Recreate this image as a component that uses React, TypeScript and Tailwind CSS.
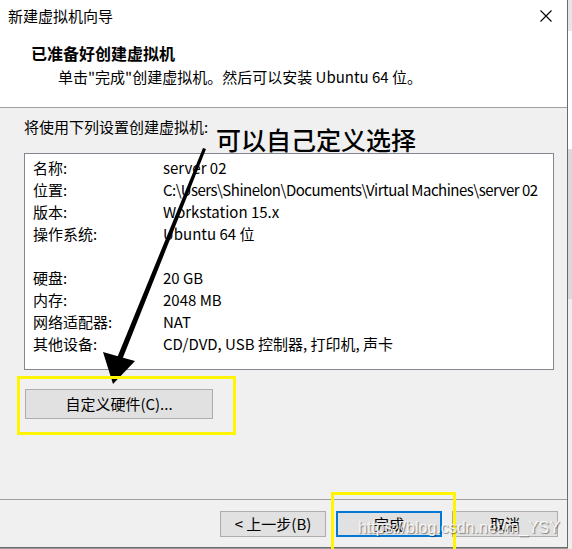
import React from 'react';

const font = "font-['Noto_Sans_CJK_SC',sans-serif]";

const rows: [string, string][] = [
  ['名称:', 'server 02'],
  ['位置:', 'C:\\Users\\Shinelon\\Documents\\Virtual Machines\\server 02'],
  ['版本:', 'Workstation 15.x'],
  ['操作系统:', 'Ubuntu 64 位'],
  ['', ''],
  ['硬盘:', '20 GB'],
  ['内存:', '2048 MB'],
  ['网络适配器:', 'NAT'],
  ['其他设备:', 'CD/DVD, USB 控制器, 打印机, 声卡'],
];

const Arrow = () => (
  <svg className="absolute left-0 top-0 pointer-events-none" width="572" height="549">
    <polygon points="203,148 206,149 122,360 117,358" fill="#000" />
    <polygon points="113,384 103,352 124,358 135,361" fill="#000" />
  </svg>
);

const App = () => {
  return (
    <div className={`relative w-[572px] h-[549px] overflow-hidden flex bg-[#9a9a9a] text-black ${font}`}>
      <div className="w-[568px] h-[548px] flex flex-col border-r border-b border-[#6b6b6b] bg-[#f0f0f0]">
        <div className="h-[108px] bg-white border-b border-[#a0a0a0]">
          <div className="h-[32px] flex items-center justify-between pl-[8px] pr-[15px]">
            <span className="text-[15px] leading-[20px]">新建虚拟机向导</span>
            <svg width="12" height="12" viewBox="0 0 12 12">
              <path d="M0.5 0.5 L11.5 11.5 M11.5 0.5 L0.5 11.5" stroke="#000" strokeWidth="1.1" />
            </svg>
          </div>
          <div className="pl-[31px] mt-[11px]">
            <div className="text-[16px] leading-[20px] font-bold">已准备好创建虚拟机</div>
            <div className="text-[15px] leading-[20px] mt-[4px] pl-[27px]">
              单击"完成"创建虚拟机。然后可以安装 Ubuntu 64 位。
            </div>
          </div>
        </div>

        <div className="h-[391px] px-[24px] pt-[9px]">
          <div className="text-[15px] leading-[20px]">将使用下列设置创建虚拟机:</div>
          <div className="mt-[16px] w-[530px] h-[217px] bg-white border border-[#828790] pt-[3px] pl-[8px]">
            {rows.map(([label, value], i) => (
              <div key={i} className="flex h-[22px] items-center text-[15px] leading-[20px]">
                <span className="w-[130px] shrink-0">{label}</span>
                <span className={i === 1 ? 'whitespace-nowrap tracking-[-0.5px]' : 'whitespace-nowrap'}>
                  {value}
                </span>
              </div>
            ))}
          </div>
          <button className="mt-[19px] ml-[1px] w-[188px] h-[30px] flex items-center justify-center border border-[#adadad] bg-[#e1e1e1] text-[15px] leading-[20px]">
            自定义硬件(C)...
          </button>
        </div>

        <div className="h-[48px] border-t border-[#a0a0a0] flex justify-end gap-[10px] pt-[11px] pr-[9px]">
          <button className="w-[106px] h-[26px] flex items-center justify-center border border-[#adadad] bg-[#e1e1e1] text-[15px] leading-[20px]">
            &lt; 上一步(B)
          </button>
          <button className="w-[106px] h-[26px] flex items-center justify-center border-2 border-[#0078d7] bg-[#e1e1e1] text-[15px] leading-[20px]">
            完成
          </button>
          <button className="w-[106px] h-[26px] flex items-center justify-center border border-[#adadad] bg-[#e1e1e1] text-[15px] leading-[20px]">
            取消
          </button>
        </div>
      </div>

      <div className="flex-1 flex flex-col">
        <div className="h-[31px] bg-[#e6e6e6]" />
        <div className="h-[118px] bg-white" />
        <div className="h-[150px] bg-[#dadada]" />
        <div className="flex-1 bg-[#eeeeee]" />
      </div>

      <div className="absolute left-[216px] top-[127px] text-[25px] leading-[25px] font-medium whitespace-nowrap">
        可以自己定义选择
      </div>
      <Arrow />
      <div className="absolute left-[17px] top-[376px] w-[219px] h-[59px] border-[3px] border-[#fff500]" />
      <div className="absolute left-[331px] top-[492px] w-[125px] h-[70px] border-[3px] border-[#fff500]" />
      <div className="absolute left-[358px] top-[518px] text-[16px] leading-[20px] font-['Liberation_Sans',sans-serif] text-white/85 [text-shadow:1px_1px_1px_rgba(0,0,0,0.45)] whitespace-nowrap">
        https://blog.csdn.net/m_YSY
      </div>
    </div>
  );
};

export default App;
